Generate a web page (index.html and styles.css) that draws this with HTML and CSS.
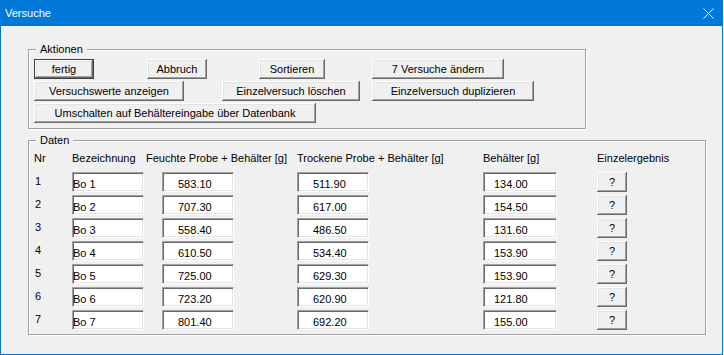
FILE: index.html
```html
<!DOCTYPE html>
<html lang="de">
<head>
    <meta charset="UTF-8">
    <meta name="viewport" content="width=device-width, initial-scale=1.0">
    <title>Versuche</title>
    <link rel="stylesheet" href="styles.css">
</head>
<body>

  <div class="window">

    <div class="titlebar">
      <span class="title">Versuche</span>
      <span class="close">
        <svg width="11" height="11" viewBox="0 0 11 11">
          <path d="M0.5 0.5 L10.5 10.5 M10.5 0.5 L0.5 10.5" stroke="#fff" stroke-width="1" fill="none"/>
        </svg>
      </span>
    </div>

    <div class="client">

      <div class="group actions">
        <span class="caption">Aktionen</span>
        <div class="btn-row">
          <button class="btn default w-fertig">fertig</button>
          <button class="btn w-abbruch">Abbruch</button>
          <button class="btn w-sort">Sortieren</button>
          <button class="btn w-aendern">7 Versuche ändern</button>
        </div>
        <div class="btn-row">
          <button class="btn w-anzeigen">Versuchswerte anzeigen</button>
          <button class="btn w-loeschen">Einzelversuch löschen</button>
          <button class="btn w-dupl">Einzelversuch duplizieren</button>
        </div>
        <div class="btn-row">
          <button class="btn w-umschalten">Umschalten auf Behältereingabe über Datenbank</button>
        </div>
      </div>

      <div class="group data">
        <span class="caption">Daten</span>

        <div class="table">
          <div class="row head">
            <span>Nr</span>
            <span>Bezeichnung</span>
            <span>Feuchte Probe + Behälter [g]</span>
            <span>Trockene Probe + Behälter [g]</span>
            <span>Behälter [g]</span>
            <span>Einzelergebnis</span>
          </div>

          <div class="row">
            <span class="nr">1</span>
            <input class="field name" value="Bo 1">
            <input class="field num wet" value="583.10">
            <input class="field num dry" value="511.90">
            <input class="field num tare" value="134.00">
            <button class="btn q">?</button>
          </div>
          <div class="row">
            <span class="nr">2</span>
            <input class="field name" value="Bo 2">
            <input class="field num wet" value="707.30">
            <input class="field num dry" value="617.00">
            <input class="field num tare" value="154.50">
            <button class="btn q">?</button>
          </div>
          <div class="row">
            <span class="nr">3</span>
            <input class="field name" value="Bo 3">
            <input class="field num wet" value="558.40">
            <input class="field num dry" value="486.50">
            <input class="field num tare" value="131.60">
            <button class="btn q">?</button>
          </div>
          <div class="row">
            <span class="nr">4</span>
            <input class="field name" value="Bo 4">
            <input class="field num wet" value="610.50">
            <input class="field num dry" value="534.40">
            <input class="field num tare" value="153.90">
            <button class="btn q">?</button>
          </div>
          <div class="row">
            <span class="nr">5</span>
            <input class="field name" value="Bo 5">
            <input class="field num wet" value="725.00">
            <input class="field num dry" value="629.30">
            <input class="field num tare" value="153.90">
            <button class="btn q">?</button>
          </div>
          <div class="row">
            <span class="nr">6</span>
            <input class="field name" value="Bo 6">
            <input class="field num wet" value="723.20">
            <input class="field num dry" value="620.90">
            <input class="field num tare" value="121.80">
            <button class="btn q">?</button>
          </div>
          <div class="row">
            <span class="nr">7</span>
            <input class="field name" value="Bo 7">
            <input class="field num wet" value="801.40">
            <input class="field num dry" value="692.20">
            <input class="field num tare" value="155.00">
            <button class="btn q">?</button>
          </div>
        </div>
      </div>

    </div>
  </div>

</body>
</html>
```

FILE: styles.css
```css
*{
    margin: 0;
    padding: 0;
}
body{
    background-color: #fff;
    color: #000;
    font-family: "Liberation Sans", Arial, sans-serif;
    font-size: 11px;
    line-height: 13px;
}
.window{
    width: 723px;
    height: 355px;
    box-sizing: border-box;
    border: 1px solid #0078d7;
    border-top: none;
    background-color: #f0f0f0;
    display: flex;
    flex-direction: column;
}
.titlebar{
    height: 26px;
    flex: none;
    background-color: #0078d7;
    color: #fff;
    display: flex;
    align-items: center;
    justify-content: space-between;
    padding: 0 8px 0 4px;
}
.close{
    display: flex;
    margin-top: 1px;
}
.client{
    flex: 1;
    padding: 23px 0 0 27px;
}

/* group boxes */
.group{
    position: relative;
    box-sizing: border-box;
    border: 1px solid #a0a0a0;
    box-shadow: 1px 1px 0 #fff, inset 1px 1px 0 #fff;
}
.caption{
    position: absolute;
    top: -7px;
    left: 7px;
    padding: 0 4px;
    background-color: #f0f0f0;
}
.actions{
    width: 558px;
    height: 80px;
    padding: 9px 0 0 5px;
    display: flex;
    flex-direction: column;
    gap: 2px;
}
.data{
    width: 678px;
    height: 195px;
    margin-top: 11px;
    padding: 11px 0 0 5px;
}

/* buttons */
.btn-row{
    display: flex;
}
.btn{
    height: 20px;
    box-sizing: border-box;
    border: none;
    background-color: #f0f0f0;
    font: inherit;
    color: #000;
    text-align: center;
    box-shadow: inset -1px -1px 0 #696969, inset 1px 1px 0 #fff, inset -2px -2px 0 #a0a0a0, inset 2px 2px 0 #e3e3e3;
}
.btn.default{
    box-shadow: inset 0 0 0 1px #404040, inset -2px -2px 0 #696969, inset 2px 2px 0 #fff, inset -3px -3px 0 #a0a0a0, inset 3px 3px 0 #e3e3e3;
}
.w-fertig{ width: 60px; }
.w-abbruch{ width: 60px; margin-left: 53px; }
.w-sort{ width: 66px; margin-left: 52px; }
.w-aendern{ width: 132px; margin-left: 47px; }
.w-anzeigen{ width: 150px; }
.w-loeschen{ width: 138px; margin-left: 38px; }
.w-dupl{ width: 162px; margin-left: 12px; }
.w-umschalten{ width: 282px; }

/* data table */
.table{
    display: flex;
    flex-direction: column;
    gap: 3px;
}
.row{
    display: grid;
    grid-template-columns: 38px 74px 151px 186px 114px 1fr;
    height: 20px;
    align-items: start;
}
.row.head{
    height: 13px;
    margin-bottom: 4px;
}
.nr{
    padding-top: 3px;
    padding-left: 1px;
}
.field{
    box-sizing: border-box;
    height: 20px;
    width: 72px;
    border: 1px solid;
    border-color: #a0a0a0 #fff #fff #a0a0a0;
    box-shadow: inset 1px 1px 0 #696969, inset -1px -1px 0 #e3e3e3;
    background-color: #fff;
    font: inherit;
    color: #000;
    padding: 3px 0 0 0;
    outline: none;
}
.wet{
    margin-left: 16px;
}
.num{
    padding-left: 15px;
}
.tare{
    width: 74px;
    padding-left: 10px;
}
.q{
    width: 30px;
}
```
